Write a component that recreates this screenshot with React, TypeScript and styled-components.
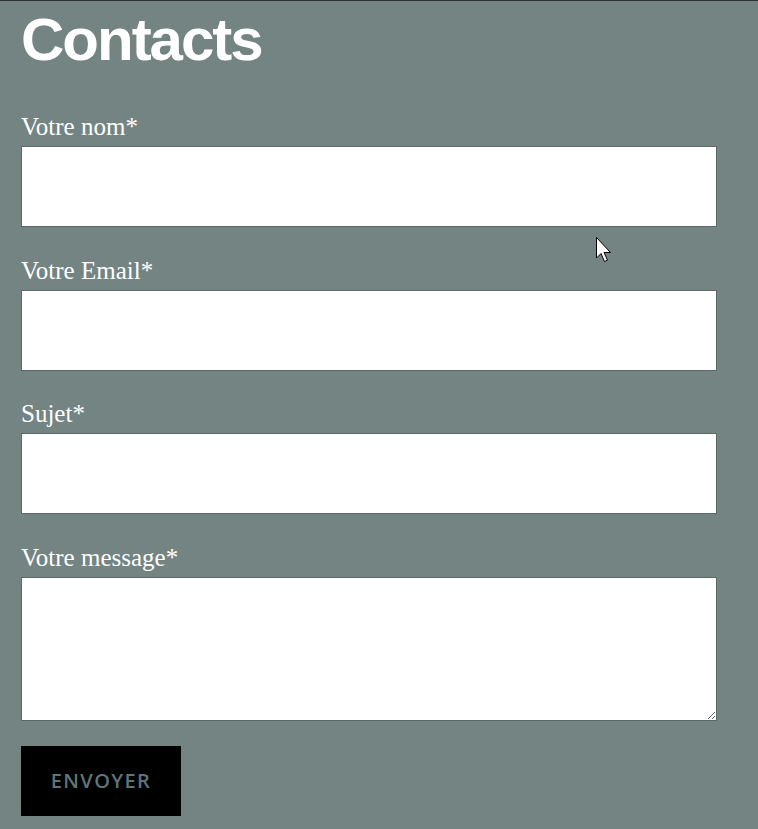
import React from "react";
import styled, { createGlobalStyle } from "styled-components";

const Global = createGlobalStyle`
  html, body { margin: 0; padding: 0; background: #748482; }
  body { border-top: 1px solid #2f3436; min-height: 828px; }
`;

const Page = styled.div`
  position: relative;
  padding: 9px 0 0 21px;
  width: 696px;
`;

const Title = styled.h1`
  margin: 0 0 42px;
  font-family: "Liberation Sans", Arial, sans-serif;
  font-weight: 700;
  font-size: 60px;
  line-height: 60px;
  letter-spacing: -2px;
  color: #ffffff;
`;

const Form = styled.form`
  display: flex;
  flex-direction: column;
  gap: 28.6px;
`;

const Field = styled.div`
  display: flex;
  flex-direction: column;
  gap: 6px;
`;

const Label = styled.label`
  font-family: "Liberation Serif", "Times New Roman", serif;
  font-size: 25px;
  line-height: 28px;
  padding-top: 1px;
  margin-bottom: -1px;
  color: #ffffff;
`;

const TextInput = styled.input`
  box-sizing: border-box;
  width: 696px;
  height: 81px;
  margin: 0;
  border: 1px solid #5f6868;
  background: #ffffff;
  outline: none;
  padding: 0 10px;
`;

const TextArea = styled.textarea`
  box-sizing: border-box;
  width: 696px;
  height: 144px;
  margin: 0;
  border: 1px solid #5f6868;
  background: #ffffff;
  outline: none;
  display: block;
`;

const Button = styled.button`
  margin-top: -3px;
  align-self: flex-start;
  width: 160px;
  height: 70px;
  border: none;
  background: #000000;
  color: #5f7579;
  font-family: "Open Sans", "Noto Sans", sans-serif;
  font-weight: 600;
  font-size: 20px;
  letter-spacing: 1.4px;
  padding: 0 0 1px;
  cursor: pointer;
`;

const Cursor = styled.svg`
  position: absolute;
  left: 596px;
  top: 236px;
  pointer-events: none;
`;

export default function App() {
  return (
    <>
      <Global />
      <Page>
        <Title>Contacts</Title>
        <Form onSubmit={(e) => e.preventDefault()}>
          <Field>
            <Label>Votre nom*</Label>
            <TextInput type="text" />
          </Field>
          <Field>
            <Label>Votre Email*</Label>
            <TextInput type="email" />
          </Field>
          <Field>
            <Label>Sujet*</Label>
            <TextInput type="text" />
          </Field>
          <Field>
            <Label>Votre message*</Label>
            <TextArea />
          </Field>
          <Button type="submit">ENVOYER</Button>
        </Form>
        <Cursor width="20" height="28" viewBox="0 0 20 28">
          <path
            d="M0.5 0.5 L0.5 21 L5 16.5 L8.5 24.5 L11.5 23.2 L8 15.5 L14.5 15.5 Z"
            fill="#ffffff"
            stroke="#000000"
            strokeWidth="1"
            strokeLinejoin="miter"
          />
        </Cursor>
      </Page>
    </>
  );
}
